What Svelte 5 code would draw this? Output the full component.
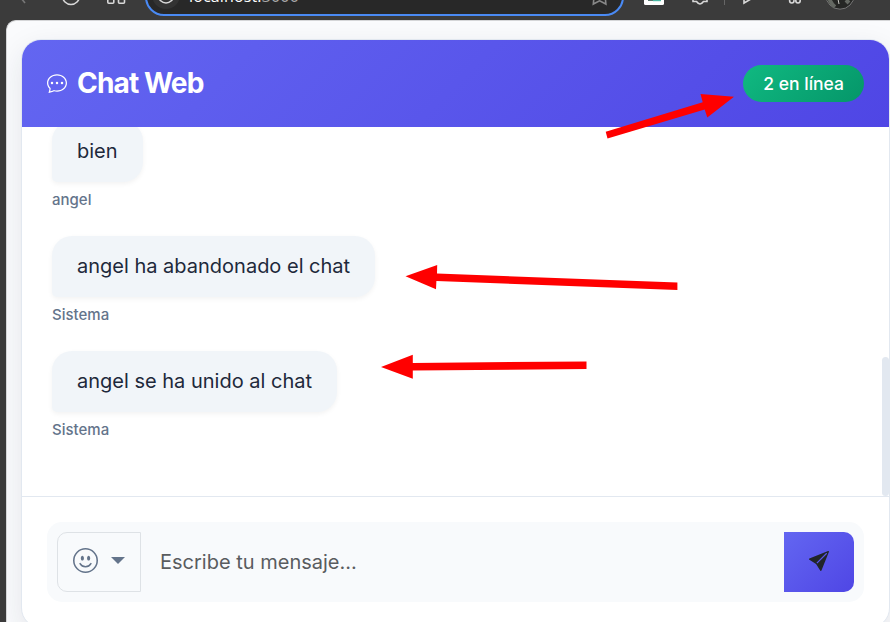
<script>
  const messages = [
    { text: 'bien', author: 'angel' },
    { text: 'angel ha abandonado el chat', author: 'Sistema' },
    { text: 'angel se ha unido al chat', author: 'Sistema' }
  ];
  const arrows = [
    '605.7,131.7 702.7,102.3 700.5,94 734,96.8 707.3,117.5 704.7,109.5 607.5,138.6',
    '677.4,282.4 437,273.5 437.2,265 405.5,276.3 436,289.3 436.4,281 677.4,290',
    '586.5,361.4 412.8,363 412.8,354.8 381,367 412.8,378.7 412.8,370.6 586.5,369'
  ];
</script>

<div class="window">
  <div class="toolbar">
    <svg class="tools" width="890" height="20" viewBox="0 0 890 20" fill="none" stroke="#d8d8d8" stroke-width="1.6">
      <path d="M21-2l4 5" stroke="#777" />
      <circle cx="71" cy="-4" r="8.5" />
      <rect x="107.8" y="-4" width="6" height="7.3" rx="1" /><rect x="118.5" y="-4" width="6" height="7.3" rx="1" />
      <rect x="146" y="-21" width="477" height="36" rx="18" fill="#282828" stroke="#4a8af4" stroke-width="2" />
      <circle cx="166" cy="-5" r="14" fill="#333" stroke="none" />
      <circle cx="166" cy="-4.5" r="7.5" />
      <path d="M594-3l-.7 7 6.3-3.2 6.3 3.2-.7-7" stroke="#888" />
      <rect x="644" y="-10" width="20" height="15" rx="1.5" fill="#fff" stroke="none" />
      <path d="M648 .5h5" stroke="#56766e" stroke-width="1" /><path d="M653 .5h8" stroke="#4ab9a5" stroke-width="1.4" />
      <path d="M693-1v2.5h3.5q3.5 5 7 0h3.5v-2.5" />
      <path d="M724.5 0v5" stroke="#666" stroke-width="1" />
      <path d="M744-4v7l7-4" />
      <circle cx="791.8" cy=".8" r="2.2" /><circle cx="798" cy=".8" r="2.2" />
      <circle cx="840" cy="-5" r="14.2" fill="#262725" stroke="#777" stroke-width="1" />
      <path d="M829-2q2 6 6 9M846 0l3 3" stroke="#656963" stroke-width="4" />
      <path d="M838-1l1 5" stroke="#c8c8c4" stroke-width="1" />
    </svg>
    <div class="address">localhost:<span>3000</span></div>
  </div>

  <main class="page">
    <section class="card">
      <header>
        <h1>
          <svg width="20" height="20" viewBox="0 0 16 16" fill="currentColor">
            <path d="M5 8a1 1 0 1 1-2 0 1 1 0 0 1 2 0zm4 0a1 1 0 1 1-2 0 1 1 0 0 1 2 0zm3 1a1 1 0 1 0 0-2 1 1 0 0 0 0 2z" />
            <path d="m2.165 15.803.02-.004c1.83-.363 2.948-.842 3.468-1.105A9.06 9.06 0 0 0 8 15c4.418 0 8-3.134 8-7s-3.582-7-8-7-8 3.134-8 7c0 1.76.743 3.37 1.97 4.6a10.437 10.437 0 0 1-.524 2.318l-.003.011a10.722 10.722 0 0 1-.244.637c-.079.186.074.394.273.362a21.673 21.673 0 0 0 .693-.125zm.8-3.108a1 1 0 0 0-.287-.801C1.618 10.83 1 9.468 1 8c0-3.192 3.004-6 7-6s7 2.808 7 6c0 3.193-3.004 6-7 6a8.06 8.06 0 0 1-2.088-.272 1 1 0 0 0-.711.074c-.387.196-1.24.57-2.634.893a10.97 10.97 0 0 0 .398-2z" />
          </svg>
          <span>Chat Web</span>
        </h1>
        <div class="badge">2 en línea</div>
      </header>

      <div class="messages">
        {#each messages as m}
          <div class="message">
            <div class="bubble">{m.text}</div>
            <div class="author">{m.author}</div>
          </div>
        {/each}
        <div class="thumb"></div>
      </div>

      <footer>
        <div class="group">
          <button class="emoji" aria-label="Emojis">
            <svg width="25" height="25" viewBox="0 0 16 16" fill="currentColor">
              <path d="M8 15A7 7 0 1 1 8 1a7 7 0 0 1 0 14zm0 1A8 8 0 1 0 8 0a8 8 0 0 0 0 16z" />
              <path d="M4.285 9.567a.5.5 0 0 1 .683.183A3.498 3.498 0 0 0 8 11.5a3.498 3.498 0 0 0 3.032-1.75.5.5 0 1 1 .866.5A4.498 4.498 0 0 1 8 12.5a4.498 4.498 0 0 1-3.898-2.25.5.5 0 0 1 .183-.683zM7 6.5C7 7.328 6.552 8 6 8s-1-.672-1-1.5S5.448 5 6 5s1 .672 1 1.5zm4 0c0 .828-.448 1.5-1 1.5s-1-.672-1-1.5S9.448 5 10 5s1 .672 1 1.5z" />
            </svg>
            <i class="caret"></i>
          </button>
          <input type="text" placeholder="Escribe tu mensaje..." />
          <button class="send" aria-label="Enviar">
            <svg width="20" height="20" viewBox="0 0 16 16" fill="currentColor">
              <path d="M15.964.686a.5.5 0 0 0-.65-.65L.767 5.855H.766l-.452.18a.5.5 0 0 0-.082.887l.41.26.001.002 4.995 3.178 3.178 4.995.002.002.26.41a.5.5 0 0 0 .886-.083l6-15Zm-1.833 1.89L6.637 10.07l-.215-.338a.5.5 0 0 0-.154-.154l-.338-.215 7.494-7.494 1.178-.471-.47 1.178Z" />
            </svg>
          </button>
        </div>
      </footer>
    </section>
  </main>

  <svg class="arrows" width="890" height="622" viewBox="0 0 890 622">
    {#each arrows as points}
      <polygon {points} fill="#f00" />
    {/each}
  </svg>
</div>

<style>
  * { box-sizing: border-box; }
  .window {
    position: relative;
    display: flex;
    flex-direction: column;
    width: 890px;
    height: 622px;
    overflow: hidden;
    background: #3b3b3b;
    font-family: Inter, "Liberation Sans", sans-serif;
  }
  .toolbar { position: relative; flex: none; height: 20px; overflow: hidden; }
  .tools { display: block; }
  .address {
    position: absolute;
    left: 189px;
    top: -16px;
    font: 16px/24px "Open Sans", "Noto Sans", sans-serif;
    letter-spacing: 0.15px;
    color: #fff;
  }
  .address span { color: #aaa; }
  .page {
    flex: none;
    height: 640px;
    margin-left: 6px;
    padding: 18px 0 0 14px;
    border-top: 1px solid #d5d6d8;
    border-left: 1px solid #d5d6d8;
    border-radius: 10px 0 0 0;
    background: #fafbfd;
    overflow: hidden;
  }
  .card {
    display: flex;
    flex-direction: column;
    width: 869px;
    height: 589px;
    border: 1px solid #e2e8f0;
    border-radius: 20px;
    background: #fff;
    overflow: hidden;
    box-shadow: 0 10px 30px rgba(30, 41, 59, 0.1);
  }
  header {
    flex: none;
    display: flex;
    align-items: center;
    justify-content: space-between;
    height: 87px;
    padding: 0 25px;
    background: linear-gradient(135deg, #6366f1, #4f46e5);
    color: #fff;
  }
  h1 {
    display: flex;
    align-items: center;
    gap: 10px;
    margin: 0;
    padding-bottom: 2px;
    font-size: 28.1px;
    font-weight: 700;
    letter-spacing: -0.9px;
  }
  .badge {
    height: 37px;
    padding: 0 20px;
    border-radius: 19px;
    background: linear-gradient(135deg, #10b981, #059669);
    font-size: 17.5px;
    font-weight: 500;
    line-height: 37px;
  }
  .messages {
    position: relative;
    flex: none;
    display: flex;
    flex-direction: column;
    justify-content: flex-end;
    height: 369px;
    padding: 0 30px;
    padding-bottom: 30px;
    overflow: hidden;
  }
  .message { flex: none; display: flex; flex-direction: column; align-items: flex-start; height: 115px; }
  .bubble {
    height: 61px;
    padding: 0 25px;
    border-radius: 20px 20px 20px 5px;
    background: #f1f5f9;
    box-shadow: 0 2px 5px rgba(0, 0, 0, 0.05);
    color: #1e293b;
    font-size: 20px;
    line-height: 60px;
  }
  .author { margin-top: 6px; color: #64748b; font-size: 15px; font-weight: 500; line-height: 23px; }
  .thumb { position: absolute; right: 0; bottom: 0; width: 7px; height: 139px; border-radius: 4px; background: #e2e8f0; }
  footer { flex: none; padding: 25px; border-top: 1px solid #e2e8f0; }
  .group { display: flex; height: 80px; padding: 10px; border-radius: 15px; background: #f8fafc; }
  button { display: flex; align-items: center; margin: 0; cursor: pointer; }
  .emoji {
    width: 84px;
    padding: 0 15px 3px;
    gap: 13px;
    border: 1px solid #dee2e6;
    border-radius: 10px 0 0 10px;
    background: transparent;
    color: #64748b;
  }
  .caret { border: 7px solid transparent; border-top-color: currentColor; border-bottom: 0; }
  input {
    flex: 1;
    min-width: 0;
    padding: 0 19px;
    border: 0;
    outline: 0;
    background: transparent;
    font: 20px Inter, sans-serif;
  }
  input::placeholder { color: #595c5f; opacity: 1; }
  .send {
    justify-content: center;
    width: 70px;
    padding: 0 0 2px;
    border: 0;
    border-radius: 0 10px 10px 0;
    background: linear-gradient(135deg, #6366f1, #4f46e5);
    color: #212529;
  }
  .arrows { position: absolute; inset: 0; pointer-events: none; }
</style>
